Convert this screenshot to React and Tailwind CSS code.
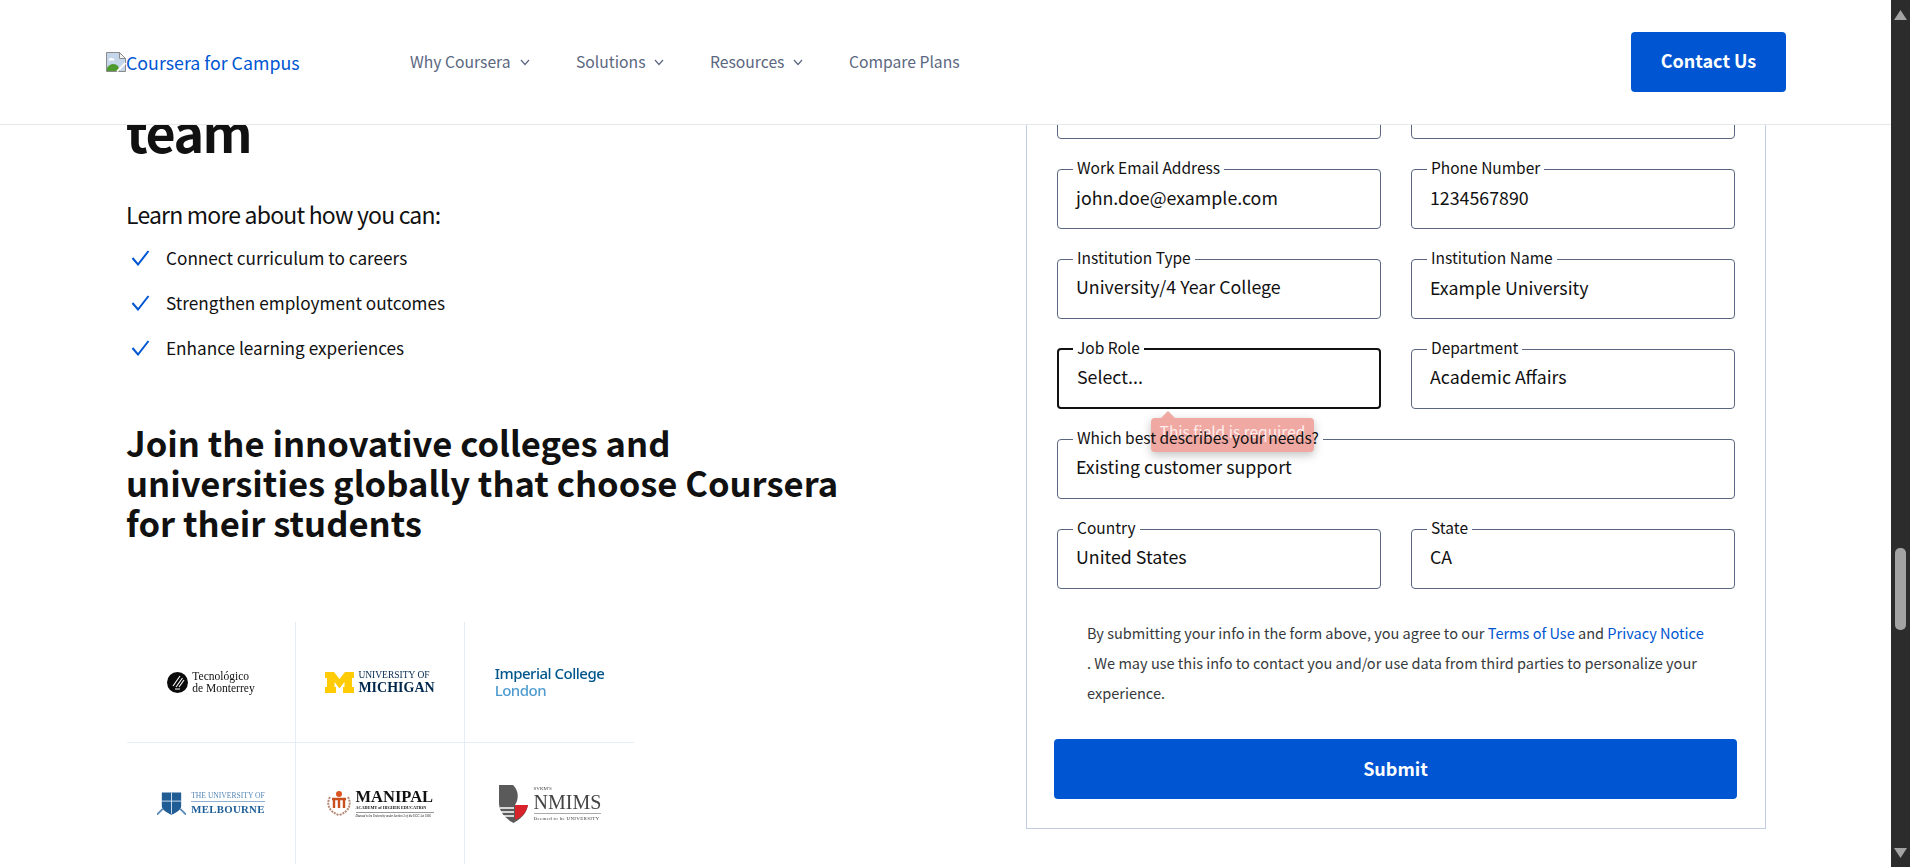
const Chevron = () => (
  <svg width="12" height="12" viewBox="0 0 12 12" fill="none" stroke="#5b6780" strokeWidth="1.2" className="ml-2">
    <path d="M2 4l4 4.500L10 4" />
  </svg>
);

const Check = () => (
  <svg width="20" height="16" viewBox="0 0 20 16" fill="none" stroke="#0056d2" strokeWidth="2">
    <path d="M1.500 8l5.500 6.500L17.500 1" />
  </svg>
);

const BrokenImage = () => (
  <svg width="20" height="20" viewBox="0 0 20 20" className="shrink-0">
    <path d="M.5.5h13l6 6v13H.5z" fill="#c5d5ea" stroke="#8a8a8a" />
    <path d="M13.500.5v6h6z" fill="#f2f2f2" stroke="#8a8a8a" />
    <path d="M3 7.500c1-2 3-2 4-1 2 0 2 2 .5 2H3.500c-1 0-1-.6-.5-1z" fill="#fff" />
    <path d="M1 19v-3c3-5 8-5 11-2l2 5z" fill="#4f9a2f" />
    <path d="M11 19.500L19.500 11" stroke="#fff" strokeWidth="2" />
  </svg>
);

const Field = ({ label, value, focus, select, tip }) => (
  <div className="relative">
    <fieldset className={`h-[70px] rounded-[4px] ${focus ? "border-2 border-[#111111] px-[14px]" : "border border-[#5b6780] px-[15px]"}`}>
      <legend className="px-[4px] text-[15.5px] leading-[20px] text-[#111111]"><span className="relative -top-[2px] z-20">{label}</span></legend>
      <div className={`pl-[3px] text-[17.8px] leading-[24px] text-[#111111] ${select ? "mt-[5px]" : "mt-[6px]"} ${focus ? "pl-[4px]" : ""}`}>{value}</div>
    </fieldset>
    {tip && (
      <div className="absolute left-[94px] top-[79px] z-10 h-[34px] w-[163px] rounded-[4px] bg-[#f0a8a2] text-center text-[15.5px] leading-[27px] text-white/80 shadow-[0_3px_10px_rgba(0,0,0,0.25)]">
        <span className="absolute left-[10px] top-[-7px] h-0 w-0 border-x-[7px] border-b-[7px] border-x-transparent border-b-[#f0a8a2]" />
        This field is required
      </div>
    )}
  </div>
);

const Cell = ({ children, className }) => (
  <div className={`flex h-[121px] items-center justify-center border-[#e6ecf8] ${className}`}><div className="blur-[0.35px]">{children}</div></div>
);

const serif = "font-['Liberation_Serif',serif]";

export default function App() {
  return (
    <div className="flex h-[867px] overflow-hidden bg-white font-['Noto_Sans_CJK_SC','Noto_Sans',sans-serif]">
      <div className="flex w-[1891px] flex-col">
        <header className="relative z-30 flex h-[125px] shrink-0 items-center border-b border-[#e5e7eb] bg-white pl-[106px]">
          <a className="flex w-[304px] items-center text-[17.8px] leading-[24px] text-[#0056d2]">
            <BrokenImage />
            Coursera for Campus
          </a>
          <nav className="flex items-center text-[15.7px] leading-[24px] text-[#5b6780]">
            <span className="flex w-[166px] items-center">Why Coursera<Chevron /></span>
            <span className="flex w-[134px] items-center">Solutions<Chevron /></span>
            <span className="flex w-[139px] items-center">Resources<Chevron /></span>
            <span>Compare Plans</span>
          </nav>
          <button className="ml-auto mr-[105px] h-[60px] w-[155px] rounded-[4px] bg-[#0056d2] pb-[3px] text-[18px] font-semibold text-white">Contact Us</button>
        </header>

        <main className="flex min-h-0 flex-1 overflow-hidden">
          <section className="w-[1026px] shrink-0 pl-[126px]">
            <h1 className="-mt-[26px] text-[52px] font-semibold leading-[64px] tracking-[-1.5px] text-[#111111]">team</h1>
            <p className="mt-[35px] text-[23px] leading-[32px] tracking-[-0.8px] text-[#111111]">Learn more about how you can:</p>
            <ul className="mt-[16px] flex flex-col gap-[21px] text-[17.2px] leading-[24px] text-[#111111]">
              {["Connect curriculum to careers", "Strengthen employment outcomes", "Enhance learning experiences"].map((t) => (
                <li key={t} className="flex items-center gap-[15px] pl-[5px]"><Check />{t}</li>
              ))}
            </ul>
            <h2 className="mt-[62px] w-[740px] text-[34.6px] font-semibold leading-[40px] text-[#111111]">
              Join the innovative colleges and universities globally that choose Coursera for their students
            </h2>
            <div className="ml-[1px] mt-[80px] grid w-[507px] grid-cols-3">
              <Cell className="border-r border-b">
                <div className="flex items-center gap-[4px]">
                  <svg width="21" height="21" viewBox="0 0 21 21"><circle cx="10.500" cy="10.500" r="10.500" fill="#0a0a0a" /><path d="M6 14L13 4M9 15L15.500 6M12 15l5-7M8 17h5" stroke="#fff" strokeWidth="1.1" /></svg>
                  <div className={`${serif} text-[11.5px] leading-[12px] text-[#111]`}>Tecnológico<br />de Monterrey</div>
                </div>
              </Cell>
              <Cell className="border-r border-b">
                <div className="flex items-center gap-[4px]">
                  <svg width="29" height="21" viewBox="0 0 29 21"><path d="M0 0h9l5.500 7L20 0h9v6h-2v9h2v6H18v-6h1.500V10l-5 6.500-5-6.500v5H11v6H0v-6h2V6H0z" fill="#ffcb05" /></svg>
                  <div className={`${serif} text-[#00274c]`}>
                    <div className="whitespace-nowrap text-[9.5px] leading-[11px]">UNIVERSITY OF</div>
                    <div className="whitespace-nowrap text-[14px] font-bold leading-[14px]">MICHIGAN</div>
                  </div>
                </div>
              </Cell>
              <Cell className="border-b">
                <div className="font-['Noto_Sans',sans-serif] text-[15px] font-medium leading-[17px] tracking-[-0.5px]">
                  <div className="text-[#00568c]">Imperial College</div>
                  <div className="text-[#4e9bd0]">London</div>
                </div>
              </Cell>
              <Cell className="border-r">
                <div className="flex items-center gap-[5px]">
                  <svg width="29" height="26" viewBox="0 0 30 26"><path d="M5 1h20v14c0 4-5 7-10 9C10 22 5 19 5 15z" fill="#1f5d94" /><path d="M15 1v22M5 10h20" stroke="#cfe0ef" /><path d="M0 24l6-6M30 24l-6-6" stroke="#5d8cb8" strokeWidth="2" /></svg>
                  <div className={`${serif}`}>
                    <div className="whitespace-nowrap border-b border-[#8db0d2] text-[7.6px] leading-[10px] text-[#5588b8]">THE UNIVERSITY OF</div>
                    <div className="whitespace-nowrap text-[10.8px] font-bold leading-[15px] tracking-[0.3px] text-[#1d5e99]">MELBOURNE</div>
                  </div>
                </div>
              </Cell>
              <Cell className="border-r">
                <div className="flex items-center gap-[5px]">
                  <svg width="24" height="28" viewBox="0 0 24 28" fill="none"><circle cx="12" cy="4" r="3" fill="#d9541e" /><path d="M5 9h14M7 9v9M12 9v9M17 9v9" stroke="#c8501e" strokeWidth="2.4" /><path d="M3 7c-4 7-1 15 9 18 10-3 13-11 9-18" stroke="#b58a74" strokeWidth="2" strokeDasharray="2 1" /></svg>
                  <div className={`${serif} w-[78px] text-[#111]`}>
                    <div className="whitespace-nowrap text-[16.5px] font-bold leading-[16px]">MANIPAL</div>
                    <div className="whitespace-nowrap text-[4.2px] font-bold leading-[6px]">ACADEMY of HIGHER EDUCATION</div>
                    <div className="mt-[1px] whitespace-nowrap border-t border-[#999] text-[3px] italic leading-[6px]">Deemed to be University under Section 3 of the UGC Act 1956</div>
                  </div>
                </div>
              </Cell>
              <Cell>
                <div className="flex items-center gap-[5px]">
                  <svg width="31" height="40" viewBox="0 0 31 40"><path d="M1 1h29v18c0 9-7 16-14.500 20C8 35 1 28 1 19z" fill="#5a5a5a" /><path d="M15 1c6 6 6 14 2 20h14V1z" fill="#fff" /><path d="M17 21h13c-1 7-7 13-13 15z" fill="#d8232a" /><path d="M2 24h14M3 28h13M5 32h11" stroke="#fff" strokeWidth="1.500" /></svg>
                  <div className={`${serif} text-[#444]`}>
                    <div className="text-[5px] leading-[6px]">SVKM'S</div>
                    <div className="whitespace-nowrap border-b border-[#aaa] text-[20px] leading-[21px]">NMIMS</div>
                    <div className="mt-[2px] whitespace-nowrap text-[5px] leading-[6px] tracking-[0.3px]">Deemed to be UNIVERSITY</div>
                  </div>
                </div>
              </Cell>
            </div>
          </section>

          <section className="-mt-[57px] h-[761px] w-[740px] shrink-0 border border-[#c0cce0] px-[30px]">
            <div className="grid grid-cols-2 gap-x-[30px] gap-y-[20px]">
              <Field label="First Name" value="John" />
              <Field label="Last Name" value="Doe" />
              <Field label="Work Email Address" value="john.doe@example.com" />
              <Field label="Phone Number" value="1234567890" />
              <Field label="Institution Type" value="University/4 Year College" select />
              <Field label="Institution Name" value="Example University" />
              <Field label="Job Role" value="Select..." select focus tip />
              <Field label="Department" value="Academic Affairs" select />
              <div className="col-span-2"><Field label="Which best describes your needs?" value="Existing customer support" select /></div>
              <Field label="Country" value="United States" select />
              <Field label="State" value="CA" select />
            </div>
            <p className="mt-[29px] pl-[30px] text-[14.55px] leading-[30px] text-[#373a3c]">
              By submitting your info in the form above, you agree to our <a className="text-[#0056d2]">Terms of Use</a> and <a className="text-[#0056d2]">Privacy Notice</a><br />
              . We may use this info to contact you and/or use data from third parties to personalize your experience.
            </p>
            <button className="-mx-[3px] mt-[31px] h-[60px] w-[683px] rounded-[4px] bg-[#0056d2] pb-[1px] text-[18px] font-semibold text-white">Submit</button>
          </section>
        </main>
      </div>

      <aside className="flex w-[19px] shrink-0 flex-col items-center bg-[#2c2c2c] pt-[10px]">
        <svg width="13" height="10" viewBox="0 0 13 10"><path d="M6.500 0L13 10H0z" fill="#a3a3a3" /></svg>
        <div className="mt-[528px] h-[82px] w-[11px] rounded-[5px] bg-[#a3a3a3]" />
        <svg className="mt-[218px]" width="13" height="10" viewBox="0 0 13 10"><path d="M0 0h13L6.500 10z" fill="#a3a3a3" /></svg>
      </aside>
    </div>
  );
}
